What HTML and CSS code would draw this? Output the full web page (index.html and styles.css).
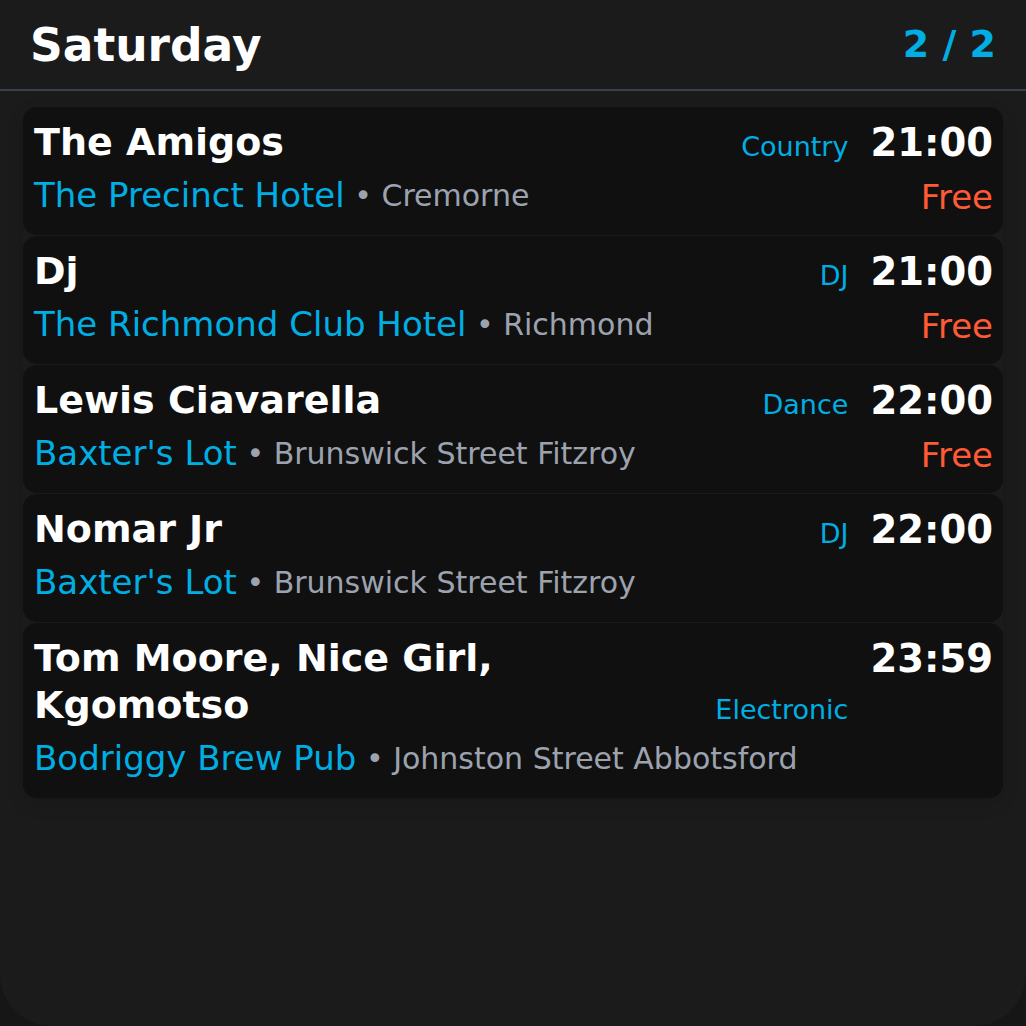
FILE: index.html
```html
<!DOCTYPE html>
<html lang="en">
<head>
<meta charset="utf-8">
<title>Saturday</title>
<link rel="stylesheet" href="styles.css">
</head>
<body>
<div class="frame">
  <header class="header">
    <h1 class="day">Saturday</h1>
    <div class="pager">2 / 2</div>
  </header>
  <div class="list">
    <div class="card">
      <div class="title">The Amigos</div>
      <div class="genre">Country</div>
      <div class="time">21:00</div>
      <div class="venue"><span class="place">The Precinct Hotel</span><span class="loc"> • Cremorne</span></div>
      <div class="price">Free</div>
    </div>
    <div class="card">
      <div class="title">Dj</div>
      <div class="genre">DJ</div>
      <div class="time">21:00</div>
      <div class="venue"><span class="place">The Richmond Club Hotel</span><span class="loc"> • Richmond</span></div>
      <div class="price">Free</div>
    </div>
    <div class="card">
      <div class="title">Lewis Ciavarella</div>
      <div class="genre">Dance</div>
      <div class="time">22:00</div>
      <div class="venue"><span class="place">Baxter's Lot</span><span class="loc"> • Brunswick Street Fitzroy</span></div>
      <div class="price">Free</div>
    </div>
    <div class="card">
      <div class="title">Nomar Jr</div>
      <div class="genre">DJ</div>
      <div class="time">22:00</div>
      <div class="venue"><span class="place">Baxter's Lot</span><span class="loc"> • Brunswick Street Fitzroy</span></div>
      <div class="price"></div>
    </div>
    <div class="card">
      <div class="title">Tom Moore, Nice Girl, Kgomotso</div>
      <div class="genre">Electronic</div>
      <div class="time">23:59</div>
      <div class="venue"><span class="place">Bodriggy Brew Pub</span><span class="loc"> • Johnston Street Abbotsford</span></div>
      <div class="price"></div>
    </div>
  </div>
</div>
</body>
</html>
```

FILE: styles.css
```css
html, body {
  margin: 0;
  padding: 0;
  background: #161616;
}

body {
  font-family: "DejaVu Sans", "Liberation Sans", sans-serif;
  color: #ffffff;
}

.frame {
  width: 1026px;
  height: 1026px;
  box-sizing: border-box;
  background: #1b1b1b;
  border-radius: 0 0 52px 52px;
  overflow: hidden;
}

.header {
  display: flex;
  align-items: center;
  justify-content: space-between;
  padding: 20px 30px 0 30px;
  height: 91px;
  box-sizing: border-box;
  border-bottom: 2px solid #3a404c;
}

.day {
  margin: 0;
  font-size: 45.5px;
  font-weight: bold;
  line-height: 52px;
  align-self: flex-start;
}

.pager {
  font-size: 38px;
  font-weight: bold;
  color: #00aee3;
  line-height: 44px;
  margin-top: -22px;
}

.list {
  display: flex;
  flex-direction: column;
  gap: 1px;
  margin: 16px 23px 0 23px;
  box-shadow: 0 6px 18px rgba(0, 0, 0, 0.12);
  border-radius: 14px;
}

.card {
  display: grid;
  grid-template-columns: 1fr auto auto;
  column-gap: 22px;
  background: #101010;
  border-radius: 14px;
  padding: 12px 10px 18px 11px;
  min-height: 128px;
  box-sizing: border-box;
}

.title {
  font-size: 38px;
  font-weight: bold;
  line-height: 47px;
  align-self: start;
}

.genre {
  font-size: 27px;
  line-height: 38px;
  color: #00aee3;
  align-self: end;
  text-align: right;
}

.time {
  font-size: 38.5px;
  font-weight: bold;
  line-height: 47px;
  align-self: start;
  text-align: right;
}

.venue {
  grid-column: 1 / 3;
  display: flex;
  align-items: center;
  margin-top: 7px;
  height: 44px;
  white-space: nowrap;
}

.place {
  font-size: 34px;
  color: #00aee3;
}

.loc {
  font-size: 30px;
  color: #9ca3af;
  white-space: pre;
}

.price {
  grid-column: 3;
  font-size: 34px;
  line-height: 40px;
  margin-top: 11px;
  color: #ff5a36;
  text-align: right;
}
```
